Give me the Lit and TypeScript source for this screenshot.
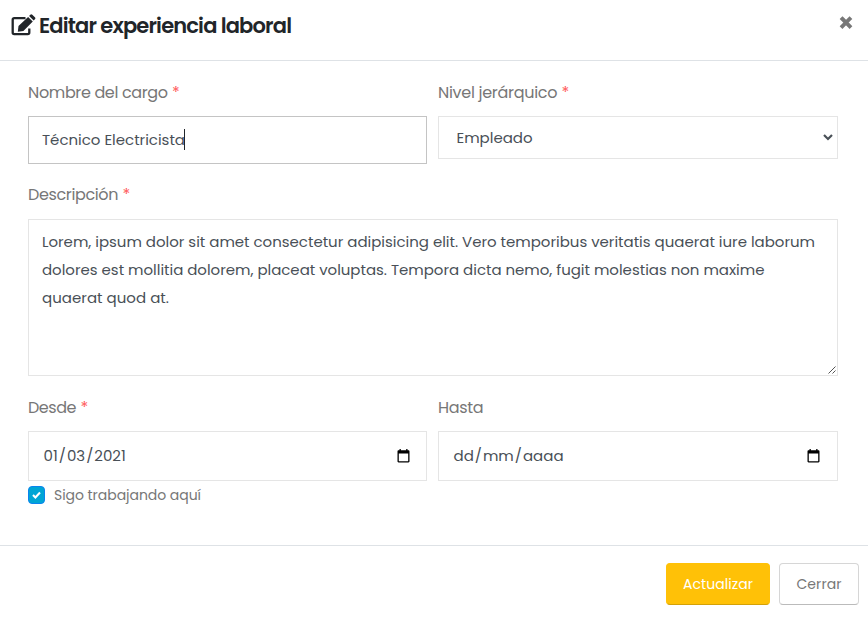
import { LitElement, html, css } from "lit";
import { customElement, property } from "lit/decorators.js";

/** A single line of text whose tracking is computed so it fills `width` pixels. */
@customElement("fit-text")
class FitText extends LitElement {
  @property({ type: Number }) width = 0;
  @property() text = "";

  static styles = css`
    :host { display: inline-block; white-space: pre; }
    .run { display: inline-block; }
  `;

  render() {
    return html`<span class="run">${this.text}</span>`;
  }

  updated() {
    const run = this.renderRoot.querySelector<HTMLElement>(".run")!;
    run.style.letterSpacing = "0";
    const natural = run.getBoundingClientRect().width;
    const gap = (this.width - natural) / Math.max(1, this.text.length - 1);
    run.style.letterSpacing = `${gap}px`;
    run.style.marginRight = `${-gap}px`;
  }
}

@customElement("app-root")
class AppRoot extends LitElement {
  static styles = css`
    :host {
      display: block;
      height: 621px;
      overflow: hidden;
      background: #fff;
      color: #495057;
      font: 400 15px/24px Poppins, Inter, sans-serif;
    }
    * { box-sizing: border-box; }
    svg { display: block; flex: none; }
    header {
      display: flex;
      height: 61px;
      padding: 10px 14px 0 11px;
      border-bottom: 1px solid #dee2e6;
      color: #212529;
    }
    h1 {
      flex: 1;
      margin: 0 0 0 3px;
      font-size: 21px;
      line-height: 31px;
      font-weight: 600;
    }
    .edit { margin-top: 4px; }
    .close { margin-top: 5px; }
    main { height: 484px; padding: 20px 30px 0 28px; }
    .row { display: grid; grid-template-columns: 399px 400px; column-gap: 11px; }
    .names { height: 102px; }
    .label { display: flex; gap: 4px; height: 24px; color: #777; font-size: 16px; }
    .star { color: #ff5b5b; }
    .box {
      display: flex;
      align-items: center;
      margin-top: 11px;
      padding: 0 13px;
      border: 1px solid #e5e5e5;
    }
    .name { height: 48px; border-color: #c4c4c4; }
    .caret { width: 1px; height: 21px; margin: -1px 0 0 -1px; background: #212529; }
    .select { height: 43px; padding: 0 4px 0 17.500px; justify-content: space-between; }
    .area {
      position: relative;
      display: block;
      height: 157px;
      margin-top: 12px;
      padding: 8px 13px;
      line-height: 28px;
    }
    .area fit-text { display: block; }
    .grip { position: absolute; right: 1px; bottom: 1px; }
    .dates { margin-top: 20px; }
    .date { height: 50px; padding: 0 17px 0 13.500px; justify-content: space-between; }
    .from { padding-right: 16px; }
    .parts { display: flex; font-variant-numeric: tabular-nums; }
    .part { padding: 0 1px; }
    .check { display: flex; align-items: center; gap: 9px; height: 24px; margin-top: 2px; color: #777; font-size: 14px; }
    .tick {
      display: grid;
      place-items: center;
      width: 17px;
      height: 18px;
      margin-top: -1px;
      border: 1px solid #0b84ee;
      border-radius: 4px;
      background: #00a5d5;
    }
    footer {
      display: flex;
      justify-content: flex-end;
      gap: 9px;
      padding: 17px 9px 0;
      border-top: 1px solid #dee2e6;
    }
    .button {
      display: flex;
      align-items: center;
      justify-content: center;
      width: 80px;
      height: 42px;
      border: 1px solid #d6d6d6;
      border-bottom-color: #bbb;
      border-radius: 4px;
      color: #777;
      font-size: 14px;
    }
    .primary { width: 104px; color: #fff; background: #ffc107; border-color: #ffc107; border-bottom-color: #d3a108; }
  `;

  private label(text: string, width: number, required = true) {
    return html`<div class="label">
      <fit-text .text=${text} .width=${width}></fit-text>
      ${required ? html`<span class="star">*</span>` : ""}
    </div>`;
  }

  private dateParts(value: string) {
    return html`<span class="parts">${value.split("/").map(
      (part, i) => html`${i ? html`<span>/</span>` : ""}<span class="part">${part}</span>`,
    )}</span>`;
  }

  private calendar() {
    return html`<svg width="13" height="14" viewBox="0 0 13 14">
      <path d="M2.5 0h1.3v1.3h5.4V0h1.3v1.3h.9c.7 0 1.1.5 1.1 1.1v9.9c0 .7-.4 1.2-1.1 1.2H1.6c-.7 0-1.1-.5-1.1-1.2V2.4c0-.6.4-1.1 1.1-1.1h.9zM1.8 4.4v7.8h9.4V4.4z" fill="#000" fill-rule="evenodd"/>
    </svg>`;
  }

  render() {
    return html`
      <header>
        <svg class="edit" width="25" height="22" viewBox="0 0 25 22">
          <path d="M14.500 4.200H3.200Q1.700 4.200 1.700 5.700V18.600Q1.700 20.200 3.200 20.200H16.800Q18.300 20.200 18.300 18.600V14.500" fill="none" stroke="#212529" stroke-width="2.300"/>
          <path d="M17.100 2.900l4.700 4.700L12.400 17l-5.600.8.700-5.700zM18.100 1.900l1.200-1.200q1-1 2 0l2.600 2.600q1 1 0 2l-1.200 1.300z" fill="#212529"/>
        </svg>
        <h1><fit-text .text=${"Editar experiencia laboral"} .width=${253}></fit-text></h1>
        <svg class="close" width="16" height="16" viewBox="0 0 16 16">
          <path d="M3.800 3.400l8.400 8.400m0-8.400l-8.400 8.400" stroke="#777" stroke-width="4.600" stroke-linecap="square" transform="translate(1.200 1.100) scale(.85)"/>
        </svg>
      </header>
      <main>
        <div class="row names">
          <div>
            ${this.label("Nombre del cargo", 140)}
            <div class="box name">
              <fit-text .text=${"Técnico Electricista"} .width=${143}></fit-text>
              <span class="caret"></span>
            </div>
          </div>
          <div>
            ${this.label("Nivel jerárquico", 119.5)}
            <div class="box select">
              <fit-text .text=${"Empleado"} .width=${76}></fit-text>
              <svg width="10" height="7" viewBox="0 0 10 7">
                <path d="M1 1l4 4 4-4" fill="none" stroke="#495057" stroke-width="2.200"/>
              </svg>
            </div>
          </div>
        </div>
        ${this.label("Descripción", 90.5)}
        <div class="box area">
          <fit-text .text=${"Lorem, ipsum dolor sit amet consectetur adipisicing elit. Vero temporibus veritatis quaerat iure laborum"} .width=${773}></fit-text>
          <fit-text .text=${"dolores est mollitia dolorem, placeat voluptas. Tempora dicta nemo, fugit molestias non maxime"} .width=${722.5}></fit-text>
          <fit-text .text=${"quaerat quod at."} .width=${127}></fit-text>
          <svg class="grip" width="8" height="8" viewBox="0 0 8 8">
            <path d="M.5 7.500l7-7m-3 7l3-3" stroke="#555" fill="none"/>
          </svg>
        </div>
        <div class="row dates">
          <div>
            ${this.label("Desde", 48.5)}
            <div class="box date from">
              ${this.dateParts("01/03/2021")}${this.calendar()}
            </div>
            <div class="check">
              <span class="tick">
                <svg width="9" height="8" viewBox="0 0 9 8">
                  <path d="M1 4l2.400 2.400L8 1.600" fill="none" stroke="#fff" stroke-width="2.100"/>
                </svg>
              </span>
              <fit-text .text=${"Sigo trabajando aquí"} .width=${147}></fit-text>
            </div>
          </div>
          <div>
            ${this.label("Hasta", 45.5, false)}
            <div class="box date">
              ${this.dateParts("dd/mm/aaaa")}${this.calendar()}
            </div>
          </div>
        </div>
      </main>
      <footer>
        <span class="button primary"><fit-text .text=${"Actualizar"} .width=${70}></fit-text></span>
        <span class="button"><fit-text .text=${"Cerrar"} .width=${45}></fit-text></span>
      </footer>
    `;
  }
}
